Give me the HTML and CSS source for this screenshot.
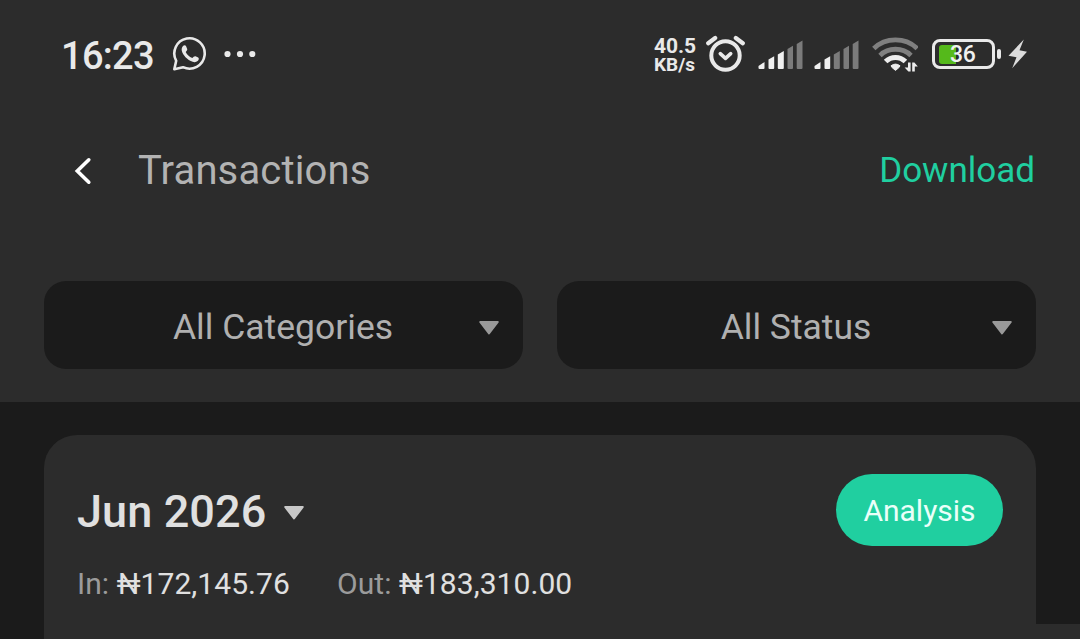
FILE: index.html
```html
<!DOCTYPE html>
<html lang="en">
<head>
    <meta charset="UTF-8">
    <title>Transactions</title>
    <link rel="stylesheet" href="styles.css">
</head>
<body>

<header class="top">
    <div class="status">
        <span class="clock">16:23</span>
        <svg class="whatsapp" width="36" height="36" viewBox="0 0 36 36">
            <path d="M2.3 33.3 L4.2 24.8 A15.2 15.2 0 1 1 11 31.2 Z" fill="none" stroke="#e9e9e9" stroke-width="2.6" stroke-linejoin="round"/>
            <path d="M11 10 C12 8.9 13.6 9 14.1 10.2 L15.2 13.1 C15.6 14.2 14.5 15.2 13.7 16 C15.1 18.8 17.2 20.8 20.3 22 C21.3 21 22.3 19.9 23.5 20.2 L26.2 21.5 C27.3 22.1 26.8 24.1 25.6 25.1 C22.9 27.4 18.3 25.6 15 22.6 C11 19 7.7 13.6 11 10 Z" fill="#e9e9e9"/>
        </svg>
        <svg class="dots" width="32" height="8" viewBox="0 0 32 8">
            <circle cx="3.5" cy="4" r="3.1"/>
            <circle cx="16" cy="4" r="3.1"/>
            <circle cx="28.3" cy="4" r="3.1"/>
        </svg>

        <div class="speed">
            <span class="rate">40.5</span>
            <span class="unit">KB/s</span>
        </div>
        <svg class="alarm" width="40" height="38" viewBox="0 0 40 38" fill="none" stroke="#e9e9e9" stroke-linecap="round" stroke-linejoin="round">
            <circle cx="19.5" cy="20.5" r="14.2" stroke-width="4"/>
            <path d="M14.3 18.7 L19.5 23.4 L24.7 18.7" stroke-width="3.6"/>
            <path d="M2.2 8.2 L9.2 3 M36.8 8.2 L29.8 3" stroke-width="4.2"/>
        </svg>
        <svg class="signal" width="46" height="30" viewBox="0 0 46 30">
            <path d="M0.5 26 L6.5 22 V28 Q6.5 29 5.5 29 H1.5 Q0.5 29 0.5 28 Z"/>
            <path d="M10.5 19.5 L16.2 16.3 V28 Q16.2 29 15.2 29 H11.5 Q10.5 29 10.5 28 Z"/>
            <path d="M19.8 14.5 L25.8 11 V28 Q25.8 29 24.8 29 H20.8 Q19.8 29 19.8 28 Z"/>
            <path class="off" d="M29.5 9 L35 5.8 V28 Q35 29 34 29 H30.5 Q29.5 29 29.5 28 Z"/>
            <path class="off" d="M38.7 4 L44.5 0.5 V28 Q44.5 29 43.5 29 H39.7 Q38.7 29 38.7 28 Z"/>
        </svg>
        <svg class="signal second" width="46" height="30" viewBox="0 0 46 30">
            <path d="M0.5 26 L6.5 22 V28 Q6.5 29 5.5 29 H1.5 Q0.5 29 0.5 28 Z"/>
            <path d="M10.5 19.5 L16.2 16.3 V28 Q16.2 29 15.2 29 H11.5 Q10.5 29 10.5 28 Z"/>
            <path class="off" d="M19.8 14.5 L25.8 11 V28 Q25.8 29 24.8 29 H20.8 Q19.8 29 19.8 28 Z"/>
            <path class="off" d="M29.5 9 L35 5.8 V28 Q35 29 34 29 H30.5 Q29.5 29 29.5 28 Z"/>
            <path class="off" d="M38.7 4 L44.5 0.5 V28 Q44.5 29 43.5 29 H39.7 Q38.7 29 38.7 28 Z"/>
        </svg>
        <svg class="wifi" width="46" height="36" viewBox="0 0 46 36" fill="none">
            <path d="M1.8 11.5 C13.5 0 33.5 0 45.2 11.5" stroke="#808080" stroke-width="4.8"/>
            <path d="M8 18.4 C16.5 10.2 30.5 10.2 39 18.4" stroke="#808080" stroke-width="4.8"/>
            <path d="M13.6 24.6 C19.2 19 27.8 19 33.4 24.6" stroke="#ededed" stroke-width="5"/>
            <path d="M19 28.8 Q23.5 25.4 28 28.8 Q28 30.2 23.5 33.4 Q19 30.2 19 28.8 Z" fill="#ededed" stroke="#ededed" stroke-linejoin="round"/>
            <path d="M36 25.6 H38.6 V34.6 H36.4 L32.6 30.6 H36 Z M40.2 25.6 H42.4 L45.8 29.6 H42.8 V34.6 H40.2 Z" fill="#ededed"/>
        </svg>
        <div class="battery">
            <div class="level"></div>
            <span class="percent">36</span>
        </div>
        <div class="tip"></div>
        <svg class="bolt" width="20" height="30" viewBox="0 0 20 30">
            <path d="M15.8 0.5 L0.5 16.7 L8.5 18.2 L4.2 29.3 L19 12.8 L11.5 11.2 Z" fill="#dcdcdc"/>
        </svg>
    </div>

    <div class="nav">
        <svg class="back" width="18" height="28" viewBox="0 0 18 28">
            <path d="M14.8 2.8 L3.3 14 L14.8 25.2" fill="none" stroke="#fff" stroke-width="3.6" stroke-linecap="round"/>
        </svg>
        <h1 class="title">Transactions</h1>
        <a class="download">Download</a>
    </div>

    <div class="filters">
        <div class="filter">
            <span class="filter-name">All Categories</span>
            <svg class="arrow" width="22" height="16" viewBox="0 0 22 16">
                <path d="M2.2 2 H19.8 L11 13.5 Z"/>
            </svg>
        </div>
        <div class="filter">
            <span class="filter-name">All Status</span>
            <svg class="arrow" width="22" height="16" viewBox="0 0 22 16">
                <path d="M2.2 2 H19.8 L11 13.5 Z"/>
            </svg>
        </div>
    </div>
</header>

<main class="list">
    <section class="card">
        <div class="card-head">
            <h2 class="month">Jun 2026</h2>
            <svg class="arrow light" width="22" height="16" viewBox="0 0 22 16">
                <path d="M2.2 2 H19.8 L11 13.5 Z"/>
            </svg>
            <button class="analysis">Analysis</button>
        </div>
        <div class="totals">
            <div class="total in">In: <b>₦172,145.76</b></div>
            <div class="total out">Out: <b>₦183,310.00</b></div>
        </div>
    </section>
</main>
<div class="corner"></div>

</body>
</html>
```
FILE: styles.css
```css
*{
    margin: 0;
    padding: 0;
    box-sizing: border-box;
}
body{
    position: relative;
    display: flex;
    flex-direction: column;
    height: 639px;
    overflow: hidden;
    background: #1b1b1b;
    font-family: Roboto, "Noto Sans", sans-serif;
    color: #e0e0e0;
}
svg{
    display: block;
    flex: none;
}
.top{
    flex: none;
    height: 402px;
    background: #2c2c2c;
}

/* status bar */
.status{
    display: flex;
    align-items: center;
    height: 108px;
    padding-left: 61px;
}
.clock{
    width: 111px;
    padding-top: 3px;
    font-size: 38px;
    font-weight: 500;
    line-height: 44px;
    letter-spacing: -0.7px;
    color: #e9e9e9;
}
.dots{
    margin-left: 16px;
    fill: #e9e9e9;
}
.speed{
    width: 52px;
    margin-left: auto;
    padding-top: 2px;
    font-weight: 700;
    color: #e9e9e9;
}
.speed span{
    display: block;
}
.rate{
    font-size: 21px;
    line-height: 19px;
    letter-spacing: -0.1px;
}
.unit{
    font-size: 19px;
    line-height: 18px;
}
.signal{
    margin: 2px 0 0 12px;
    fill: #f0f0f0;
}
.signal.second{
    margin-left: 10px;
}
.signal .off{
    fill: #7b7b7b;
}
.wifi{
    margin: 1px 0 0 12px;
}
.battery{
    display: flex;
    align-items: center;
    width: 63px;
    height: 30px;
    margin-left: 14px;
    padding-left: 4px;
    border: 3px solid #e9e9e9;
    border-radius: 8px;
}
.level{
    width: 17px;
    height: 19px;
    border-radius: 3px 0 0 3px;
    background: #55b91b;
}
.percent{
    margin: 2px 0 0 -6px;
    font-size: 23px;
    font-weight: 500;
    line-height: 24px;
    letter-spacing: -0.3px;
    color: #f0f0f0;
}
.tip{
    width: 4px;
    height: 10px;
    margin-left: 2px;
    border-radius: 2px;
    background: #e9e9e9;
}
.bolt{
    margin: 0 52px 0 7px;
}

/* title row */
.nav{
    display: flex;
    align-items: center;
    height: 126px;
    padding: 0 45px 0 74px;
}
.title{
    margin: -2px 0 0 46px;
    font-size: 40px;
    font-weight: 400;
    letter-spacing: 0.15px;
    color: #b3b3b3;
}
.download{
    margin: -1px 0 0 auto;
    font-size: 35px;
    color: #20cfa0;
}

/* filters */
.filters{
    display: grid;
    grid-template-columns: 1fr 1fr;
    gap: 34px;
    padding: 47px 44px 0;
}
.filter{
    display: flex;
    align-items: center;
    height: 88px;
    padding: 5px 23px 0 0;
    border-radius: 22px;
    background: #1b1b1b;
}
.filter-name{
    flex: 1;
    margin-top: -2px;
    padding-left: 44px;
    text-align: center;
    font-size: 35.5px;
    color: #b0b0b0;
}
.arrow{
    fill: #999;
    stroke: #999;
    stroke-width: 2;
    stroke-linejoin: round;
}
.arrow.light{
    fill: #c8c8c8;
    stroke: #c8c8c8;
}

/* month card */
.list{
    display: flex;
    flex: 1;
    padding: 33px 44px 0;
}
.card{
    flex: 1;
    padding: 39px 33px 0;
    border-radius: 33px 33px 0 0;
    background: #2c2c2c;
}
.card-head{
    display: flex;
    align-items: center;
}
.month{
    padding-top: 2px;
    font-size: 45px;
    font-weight: 500;
    letter-spacing: 0.1px;
}
.card-head .arrow{
    margin: 5px 0 0 17px;
}
.analysis{
    width: 167px;
    height: 72px;
    margin-left: auto;
    padding-top: 1px;
    border: none;
    border-radius: 36px;
    background: #20cfa0;
    font-family: inherit;
    font-size: 30px;
    color: #eafff9;
}
.totals{
    display: flex;
    margin-top: 20px;
    font-size: 30px;
    line-height: 36px;
    letter-spacing: 0.07px;
    color: #9b9b9b;
}
.total b{
    font-weight: 400;
    color: #e0e0e0;
}
.in{
    width: 260px;
}
/* edge of the floating panel below the card */
.corner{
    position: absolute;
    right: 0;
    bottom: 0;
    width: 44px;
    height: 15px;
    background: #2c2c2c;
}
```
